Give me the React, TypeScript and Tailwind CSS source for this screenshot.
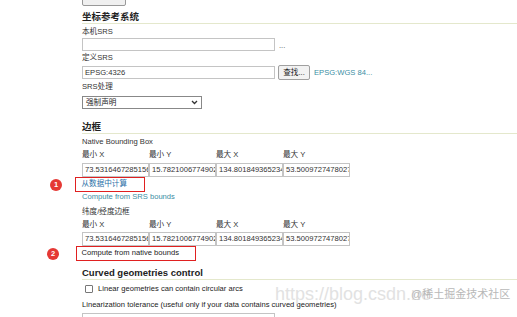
const font = { fontFamily: '"Liberation Sans", "Noto Sans CJK SC", sans-serif' };

function Heading({ children }: { children: React.ReactNode }) {
    return (
        <div className="h-[14px] border-b border-[#e4e8cc]">
            <div className="text-[9.5px] font-bold leading-[13px] text-[#222]">{children}</div>
        </div>
    );
}

function Label({ children }: { children: React.ReactNode }) {
    return <div className="h-[10px] text-[7.6px] leading-[10px] text-[#333]">{children}</div>;
}

function Badge({ n, left }: { n: number; left: string }) {
    return (
        <div
            className={`absolute top-[2px] flex h-[12px] w-[12px] items-center justify-center rounded-full bg-[#e53935] text-[7.5px] font-bold text-white ${left}`}
        >
            {n}
        </div>
    );
}

const bbox = ["73.5316467285156", "15.7821006774902", "134.801849365234", "53.5009727478027"];
const axes = ["最小 X", "最小 Y", "最大 X", "最大 Y"];

function BoxRow({ gap }: { gap: string }) {
    return (
        <div>
            <div className="flex">
                {axes.map((a) => (
                    <div key={a} className="h-[10px] w-[67px] text-[7.6px] leading-[10px] text-[#333]">
                        {a}
                    </div>
                ))}
            </div>
            <div className={`flex ${gap}`}>
                {bbox.map((v) => (
                    <div
                        key={v}
                        className="h-[14px] w-[67px] overflow-hidden whitespace-nowrap border border-[#c4c4c4] bg-white px-[2px] text-[7.6px] leading-[12px] text-[#333]"
                    >
                        {v}
                    </div>
                ))}
            </div>
        </div>
    );
}

export default function App() {
    return (
        <div className="relative h-[317px] w-[517px] overflow-hidden bg-white" style={font}>
            <div className="pl-[82px]">
                <div className="mt-[-8px] h-[14px] w-[44px] rounded-[2px] border border-[#999] bg-[#f0f0f0]" />

                <div className="mt-[4px]">
                    <Heading>坐标参考系统</Heading>
                </div>
                <div className="mt-[3px]">
                    <Label>本机SRS</Label>
                </div>
                <div className="mt-[1px] flex items-end">
                    <div className="h-[13px] w-[193px] border border-[#c4c4c4] bg-white" />
                    <span className="ml-[4px] text-[7.6px] leading-[10px] text-[#555]">...</span>
                </div>
                <div className="mt-[2px]">
                    <Label>定义SRS</Label>
                </div>
                <div className="mt-[2px] flex h-[15px] items-center">
                    <div className="h-[13px] w-[193px] border border-[#c4c4c4] bg-white px-[2px] text-[7.6px] leading-[11px] text-[#333]">
                        EPSG:4326
                    </div>
                    <div className="ml-[3px] flex h-[15px] w-[32px] items-center justify-center rounded-[2px] border border-[#a0a0a0] bg-[#f2f2f2] text-[7.6px] text-[#222]">
                        查找...
                    </div>
                    <span className="ml-[4px] text-[7.6px] text-[#3a8ea4]">EPSG:WGS 84...</span>
                </div>
                <div className="mt-[2px]">
                    <Label>SRS处理</Label>
                </div>
                <div className="mt-[4px] flex h-[13px] w-[120px] items-center justify-between border border-[#888] bg-white px-[3px] text-[7.6px] text-[#222]">
                    <span>强制声明</span>
                    <svg width="7" height="5" viewBox="0 0 7 5">
                        <path d="M1 1l2.5 2.5L6 1" fill="none" stroke="#333" strokeWidth="1.3" />
                    </svg>
                </div>

                <div className="mt-[11px]">
                    <Heading>边框</Heading>
                </div>
                <div className="mt-[3px]">
                    <Label>Native Bounding Box</Label>
                </div>
                <div className="mt-[3px]">
                    <BoxRow gap="mt-[3px]" />
                </div>
                <div className="relative h-[15px] w-fit">
                    <Badge n={1} left="left-[-32px]" />
                    <div className="ml-[-7px] h-[15px] w-[70px] border-[1.5px] border-[#e02020] pl-[5.5px] text-[7.6px] leading-[12px] text-[#2c72a8]">
                        从数据中计算
                    </div>
                </div>
                <div className="h-[10px] text-[7.6px] leading-[10px] text-[#3a8ea4]">Compute from SRS bounds</div>

                <div className="mt-[5px]">
                    <Label>纬度/经度边框</Label>
                </div>
                <div className="mt-[3px]">
                    <BoxRow gap="mt-[2px]" />
                </div>
                <div className="relative h-[15px] w-fit">
                    <Badge n={2} left="left-[-35px]" />
                    <div className="ml-[-6px] h-[15px] w-[120px] whitespace-nowrap border-[1.5px] border-[#e02020] pl-[4.5px] text-[7.6px] leading-[12px] text-[#222]">
                        Compute from native bounds
                    </div>
                </div>

                <div className="mt-[5px]">
                    <Heading>Curved geometries control</Heading>
                </div>
                <div className="mt-[4px] flex h-[10px] items-center pl-[3px]">
                    <div className="h-[8px] w-[8px] rounded-[1px] border border-[#777] bg-white" />
                    <span className="ml-[5px] text-[7.6px] leading-[10px] text-[#222]">
                        Linear geometries can contain circular arcs
                    </span>
                </div>
                <div className="mt-[6px] h-[10px] whitespace-nowrap text-[7.6px] leading-[10px] text-[#222]">
                    Linearization tolerance (useful only if your data contains curved geometries)
                </div>
                <div className="mt-[3px] h-[13px] w-[193px] border border-[#c4c4c4] bg-white" />
            </div>

            <div className="pointer-events-none absolute left-[275px] top-[281px] whitespace-nowrap text-[18px] text-[#e2e2e2]">
                https://blog.csdn.ne
            </div>
            <div className="pointer-events-none absolute left-[411px] top-[286px] whitespace-nowrap text-[11px] text-[#b8b8b8]">
                @稀土掘金技术社区
            </div>
        </div>
    );
}
